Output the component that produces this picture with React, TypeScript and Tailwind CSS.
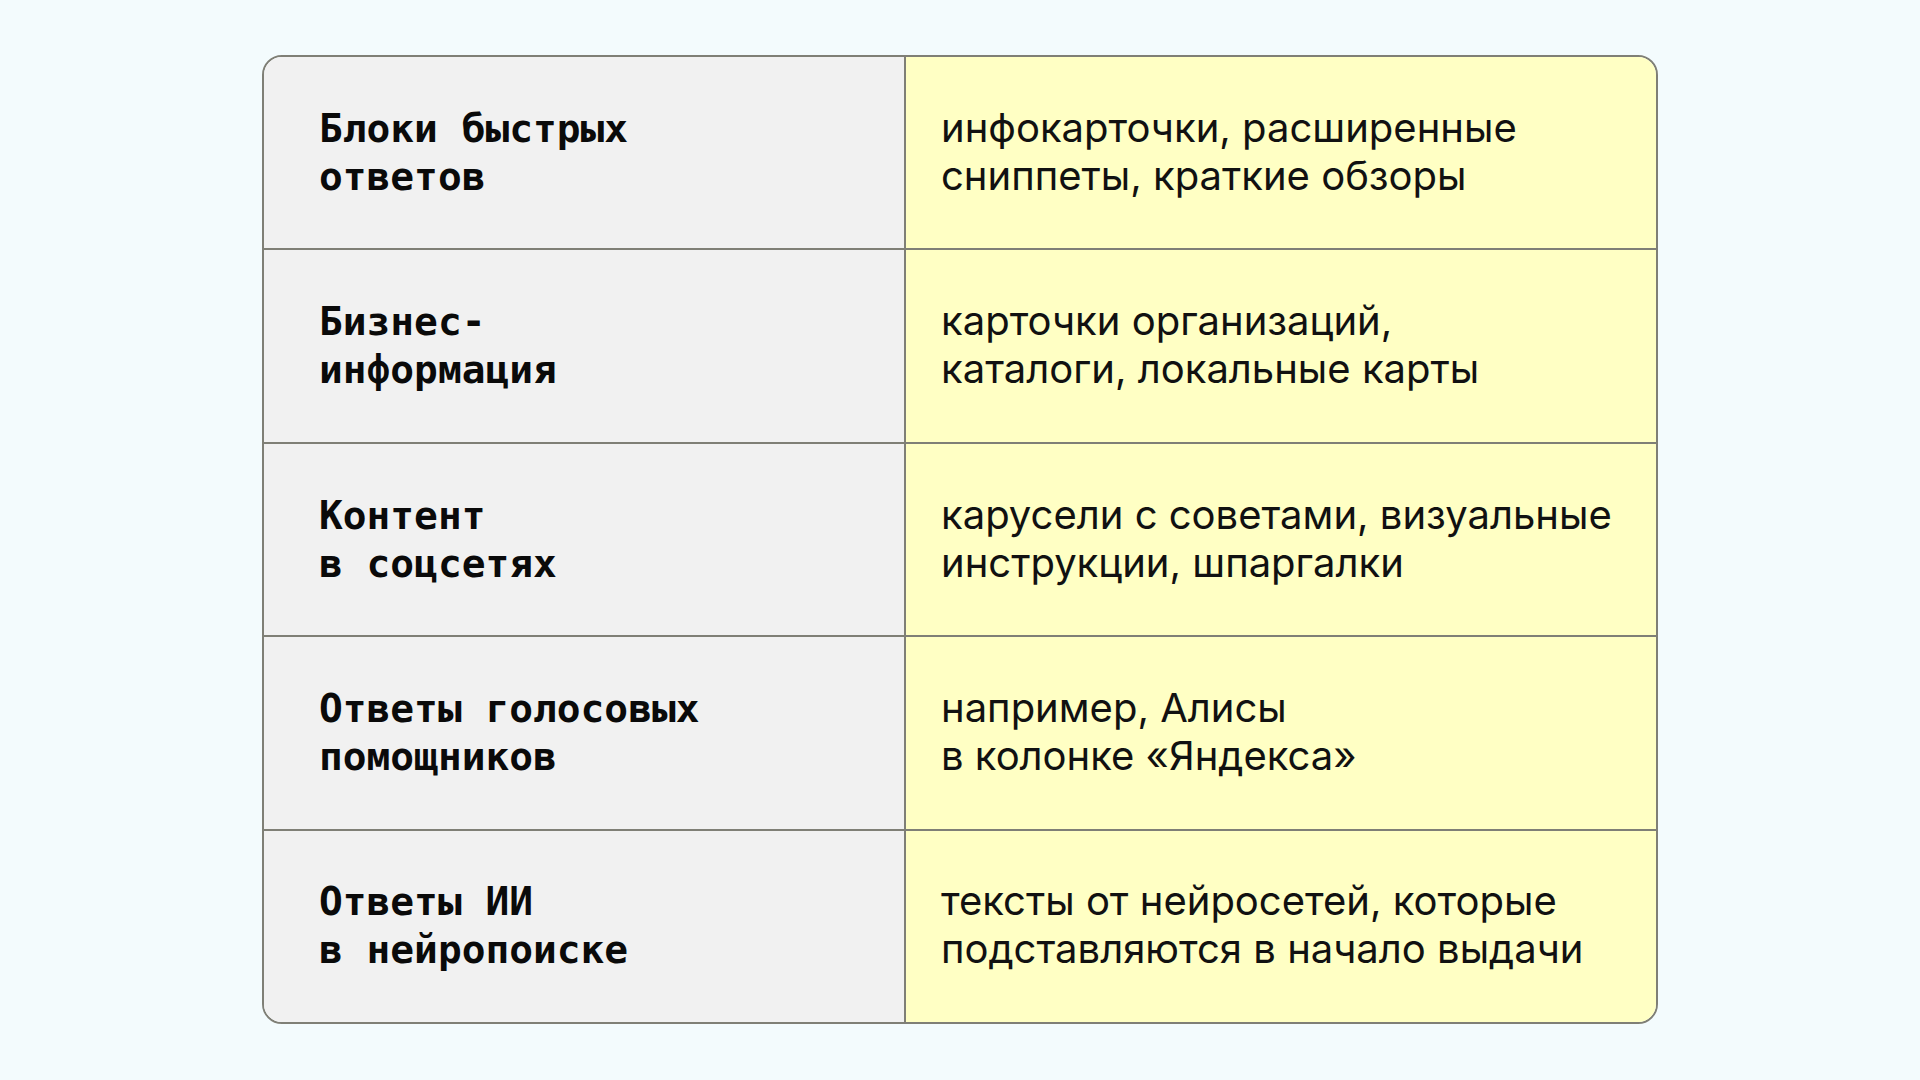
const rows = [
  { label: ['Блоки быстрых', 'ответов'], text: ['инфокарточки, расширенные', 'сниппеты, краткие обзоры'] },
  { label: ['Бизнес-', 'информация'], text: ['карточки организаций,', 'каталоги, локальные карты'] },
  { label: ['Контент', 'в соцсетях'], text: ['карусели с советами, визуальные', 'инструкции, шпаргалки'] },
  { label: ['Ответы голосовых', 'помощников'], text: ['например, Алисы', 'в колонке «Яндекса»'] },
  { label: ['Ответы ИИ', 'в нейропоиске'], text: ['тексты от нейросетей, которые', 'подставляются в начало выдачи'] },
]

export default function App() {
  return (
    <div className="min-h-screen w-full bg-[#f3fbfd] flex justify-center pt-[55px]">
      <div className="w-[1396px] h-[969px] flex flex-col border-2 border-[#7f7f76] rounded-[20px] overflow-hidden">
        {rows.map((row, i) => (
          <div
            key={i}
            className={`flex-1 grid grid-cols-[642px_1fr] ${i > 0 ? 'border-t-2 border-[#7f7f76]' : ''}`}
          >
            <div className="bg-[#f1f1f1] border-r-2 border-[#7f7f76] flex flex-col justify-center pl-[55px] pb-[2px]">
              {row.label.map((line, j) => (
                <div
                  key={j}
                  className="font-['DejaVu_Sans_Mono',monospace] font-bold text-[39.5px] leading-[48px] text-[#0a0a0a] whitespace-pre"
                >
                  {line}
                </div>
              ))}
            </div>
            <div className="bg-[#ffffc4] flex flex-col justify-center pl-[35px] pb-[2px]">
              {row.text.map((line, j) => (
                <div
                  key={j}
                  className="font-['Inter',sans-serif] text-[40px] leading-[48px] text-[#111111] whitespace-nowrap"
                >
                  {line}
                </div>
              ))}
            </div>
          </div>
        ))}
      </div>
    </div>
  )
}
